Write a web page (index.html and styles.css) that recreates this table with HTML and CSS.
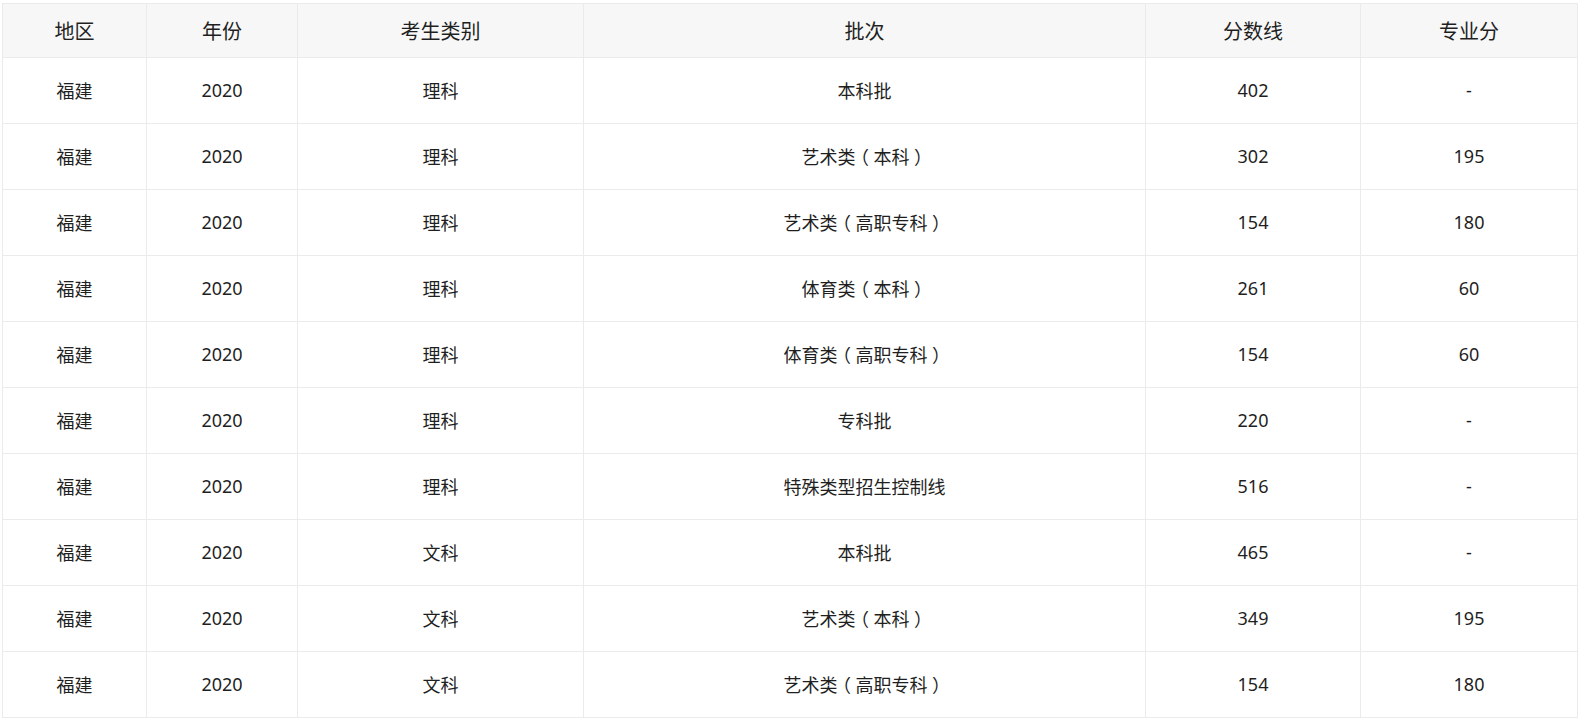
FILE: index.html
```html
<!DOCTYPE html>
<html lang="zh">
<head>
<meta charset="utf-8">
<link rel="stylesheet" href="styles.css">
</head>
<body>
<table class="score-table">
  <colgroup>
    <col class="c1"><col class="c2"><col class="c3"><col class="c4"><col class="c5"><col class="c6">
  </colgroup>
  <thead>
    <tr><th>地区</th><th>年份</th><th>考生类别</th><th>批次</th><th>分数线</th><th>专业分</th></tr>
  </thead>
  <tbody>
    <tr><td>福建</td><td>2020</td><td>理科</td><td>本科批</td><td>402</td><td>-</td></tr>
    <tr><td>福建</td><td>2020</td><td>理科</td><td>艺术类<span class="paren">（</span>本科<span class="paren">）</span></td><td>302</td><td>195</td></tr>
    <tr><td>福建</td><td>2020</td><td>理科</td><td>艺术类<span class="paren">（</span>高职专科<span class="paren">）</span></td><td>154</td><td>180</td></tr>
    <tr><td>福建</td><td>2020</td><td>理科</td><td>体育类<span class="paren">（</span>本科<span class="paren">）</span></td><td>261</td><td>60</td></tr>
    <tr><td>福建</td><td>2020</td><td>理科</td><td>体育类<span class="paren">（</span>高职专科<span class="paren">）</span></td><td>154</td><td>60</td></tr>
    <tr><td>福建</td><td>2020</td><td>理科</td><td>专科批</td><td>220</td><td>-</td></tr>
    <tr><td>福建</td><td>2020</td><td>理科</td><td>特殊类型招生控制线</td><td>516</td><td>-</td></tr>
    <tr><td>福建</td><td>2020</td><td>文科</td><td>本科批</td><td>465</td><td>-</td></tr>
    <tr><td>福建</td><td>2020</td><td>文科</td><td>艺术类<span class="paren">（</span>本科<span class="paren">）</span></td><td>349</td><td>195</td></tr>
    <tr><td>福建</td><td>2020</td><td>文科</td><td>艺术类<span class="paren">（</span>高职专科<span class="paren">）</span></td><td>154</td><td>180</td></tr>
  </tbody>
</table>
</body>
</html>
```

FILE: styles.css
```css
html, body {
  margin: 0;
  padding: 0;
  background: #ffffff;
}
body {
  padding: 3px 0 0 2px;
  font-family: "Noto Sans", "Noto Sans CJK SC", sans-serif;
  color: #1f1f1f;
}
.score-table {
  border-collapse: collapse;
  table-layout: fixed;
  width: 1575px;
}
.c1 { width: 144px; }
.c2 { width: 151px; }
.c3 { width: 286px; }
.c4 { width: 562px; }
.c5 { width: 215px; }
.c6 { width: 217px; }
.score-table th,
.score-table td {
  border: 1px solid #ebebeb;
  text-align: center;
  vertical-align: middle;
}
.score-table th {
  background: #f7f7f7;
  font-weight: normal;
  font-size: 20px;
  height: 52px;
  padding: 0 0 1px 0;
}
.score-table td {
  font-size: 18px;
  height: 63px;
  padding: 0 0 2px 0;
}
.paren {
  display: inline-block;
  width: 18px;
  text-align: center;
  font-family: "Noto Sans CJK SC", sans-serif;
  font-feature-settings: "halt" 1;
}
```
